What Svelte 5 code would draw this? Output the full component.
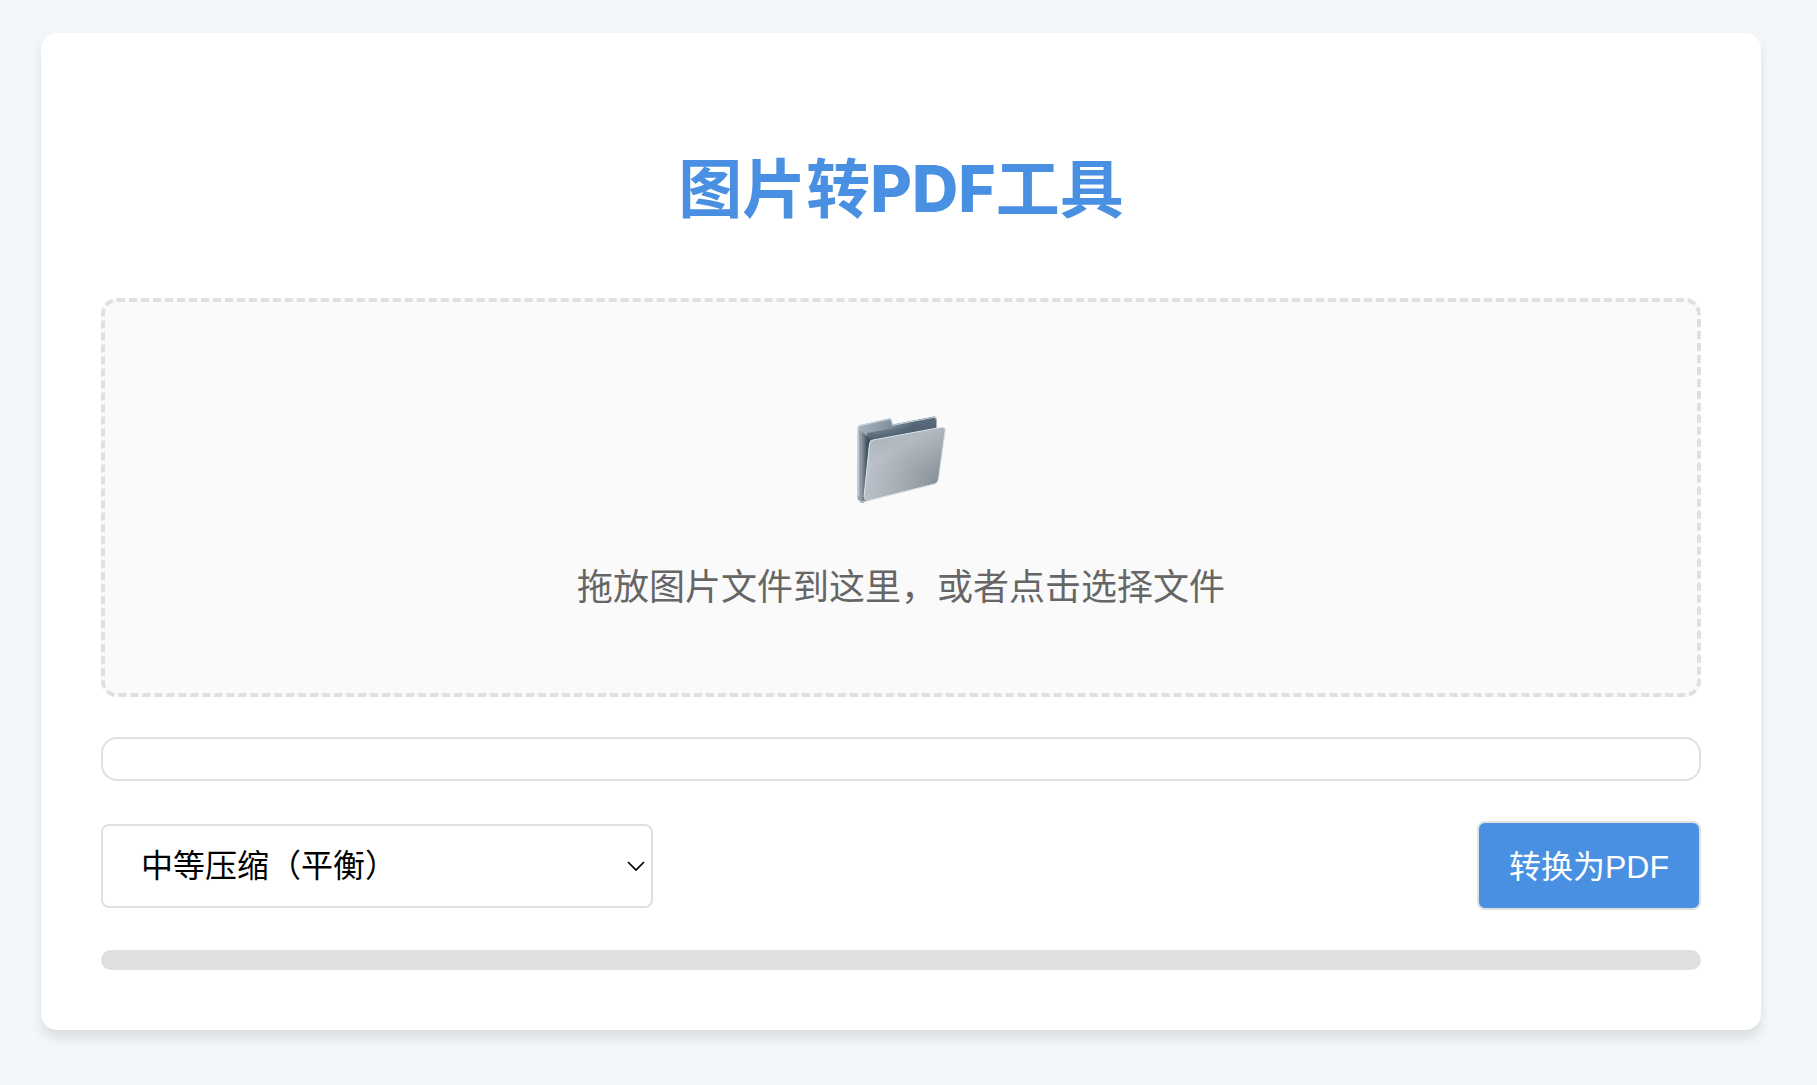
<script>
  let level = $state('medium');
  let progress = $state(0);
</script>

<main class="card">
  <h1>图片转<span class="latin">PDF</span>工具</h1>

  <label class="dropzone">
    <input class="file-input" type="file" accept="image/*" multiple />
    <svg class="folder" viewBox="0 0 120 120" aria-hidden="true">
      <defs>
        <linearGradient id="back" x1="0" y1="0" x2="1" y2="0.5">
          <stop offset="0" stop-color="#acbac4" />
          <stop offset="0.3" stop-color="#8a9aa6" />
          <stop offset="0.6" stop-color="#566877" />
          <stop offset="1" stop-color="#5a6c7a" />
        </linearGradient>
        <linearGradient id="spine" x1="0" y1="0" x2="1" y2="0">
          <stop offset="0" stop-color="#a7b5bf" />
          <stop offset="0.3" stop-color="#8796a2" />
          <stop offset="0.75" stop-color="#44545f" />
          <stop offset="1" stop-color="#34444f" />
        </linearGradient>
        <linearGradient id="fade" x1="0" y1="0" x2="0" y2="1">
          <stop offset="0" stop-color="#4b5d6b" stop-opacity="0" />
          <stop offset="1" stop-color="#4b5d6b" />
        </linearGradient>
        <linearGradient id="front" x1="0.1" y1="0" x2="0.75" y2="1">
          <stop offset="0" stop-color="#a9b1b9" />
          <stop offset="0.35" stop-color="#b3bac2" />
          <stop offset="0.6" stop-color="#a0a7af" />
          <stop offset="1" stop-color="#7f8790" />
        </linearGradient>
        <linearGradient id="glow" x1="0" y1="1" x2="0.5" y2="0.4">
          <stop offset="0" stop-color="#d0d5db" stop-opacity="0.6" />
          <stop offset="1" stop-color="#d0d5db" stop-opacity="0" />
        </linearGradient>
      </defs>
      <path d="M16.5 28.5Q16.5 25.5 19 25L48 18.5Q50 18 50.5 20L52 24.5L93 16.5Q95.5 16.2 95.5 19V40L28 100L22 103Q16.5 102 16.5 96Z" fill="url(#back)" />
      <path d="M26 33L95 21V40H26Z" fill="url(#fade)" />
      <path d="M17 30Q22 31 29 40L26.500 60L23 101Q17 101 17 95Z" fill="url(#spine)" />
      <path d="M17.2 96V28Q17.200 26 20 25.500L48 19.200Q49.500 19 50 20.500L51.500 25.300L93 17.300Q95 17 95 19.500" fill="none" stroke="#cad6de" stroke-width="1" />
      <path d="M28.5 44Q29 40.700 32 40L101 27.200Q104.500 27 104.300 30L97.500 79Q97 82.500 94 83.500L26 100.500Q22.500 101 23 97Z" fill="url(#front)" />
      <path d="M28.5 44Q29 40.700 32 40L101 27.200Q104.500 27 104.300 30L97.500 79Q97 82.500 94 83.500L26 100.500Q22.500 101 23 97Z" fill="url(#glow)" />
      <path d="M23 97L28.5 44Q29 40.700 32 40L101 27.200Q104.500 27 104.300 30L97.500 79" fill="none" stroke="#dde5ea" stroke-width="1" />
      <path d="M18 100Q20 103 24 101.500L94 84Q97 82.500 97.500 79" fill="none" stroke="#d6dce1" stroke-width="1" />
    </svg>
    <span class="hint">拖放图片文件到这里，或者点击选择文件</span>
  </label>

  <div class="file-list"></div>

  <div class="controls">
    <div class="select-wrap">
      <select bind:value={level} aria-label="压缩级别">
        <option value="low">低压缩（高质量）</option>
        <option value="medium">中等压缩（平衡）</option>
        <option value="high">高压缩（小文件）</option>
      </select>
      <svg class="chevron" viewBox="0 0 20 12" aria-hidden="true">
        <path d="M2 2L10 10L18 2" fill="none" stroke="currentColor" stroke-width="1.7" />
      </svg>
    </div>
    <button type="button">转换为PDF</button>
  </div>

  <div class="progress" role="progressbar" aria-label="转换进度" aria-valuemin="0" aria-valuemax="100" aria-valuenow={progress}>
    <div class="bar" style="width: {progress}%"></div>
  </div>
</main>

<style>
  :global(body) {
    background: #f3f7fa;
  }

  :global(#app) {
    padding: 33px 56px 55px 41px;
  }

  .card {
    box-sizing: border-box;
    padding: 60px;
    border-radius: 16px;
    background: #fff;
    box-shadow: 0 8px 12px rgba(0, 0, 0, 0.1);
    font-family: 'Liberation Sans', 'Noto Sans CJK SC', sans-serif;
  }

  h1 {
    margin: 45px 0 58px;
    color: #4a90e2;
    font-family: Inter, 'Noto Sans CJK SC', sans-serif;
    font-size: 64px;
    font-weight: 700;
    line-height: 102px;
    text-align: center;
  }

  .latin {
    font-weight: 800;
  }

  .dropzone {
    display: flex;
    flex-direction: column;
    align-items: center;
    padding: 80px 80px 76px;
    border: 4px dashed #e0e0e0;
    border-radius: 16px;
    background: #fafafa;
    cursor: pointer;
  }

  .file-input {
    position: absolute;
    width: 1px;
    height: 1px;
    opacity: 0;
  }

  .folder {
    width: 120px;
    height: 120px;
    margin: 18px 0 39px;
  }

  .hint {
    color: #666;
    font-size: 36px;
    line-height: 58px;
  }

  .file-list {
    min-height: 40px;
    margin-top: 40px;
    border: 2px solid #e0e0e0;
    border-radius: 16px;
  }

  .controls {
    display: flex;
    justify-content: space-between;
    align-items: center;
    margin: 40px 0;
  }

  .select-wrap {
    display: flex;
    flex: 0 1 552px;
    position: relative;
  }

  select,
  button {
    box-sizing: border-box;
    border: 2px solid #e0e0e0;
    border-radius: 8px;
    font-family: inherit;
    font-size: 32px;
  }

  select {
    width: 100%;
    height: 84px;
    padding: 0 60px 0 38px;
    appearance: none;
    background: #fff;
    color: #000;
  }

  .chevron {
    position: absolute;
    top: 36px;
    right: 7px;
    width: 20px;
    height: 12px;
    color: #000;
    pointer-events: none;
  }

  button {
    height: 89px;
    padding: 0 30px 4px;
    background: #4a90e2;
    color: #fff;
    cursor: pointer;
  }

  .progress {
    height: 20px;
    border-radius: 10px;
    background: #e0e0e0;
    overflow: hidden;
  }

  .bar {
    height: 100%;
    background: #4a90e2;
  }
</style>
